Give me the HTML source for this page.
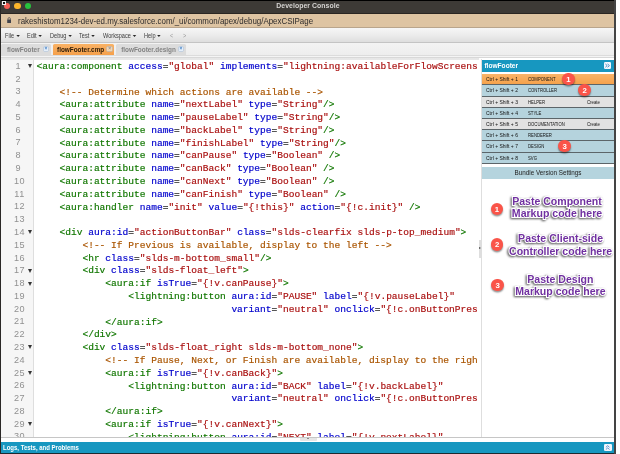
<!DOCTYPE html>
<html lang="en">
<head>
<meta charset="utf-8">
<title>Developer Console</title>
<style>
html,body{margin:0;padding:0;}
body{width:620px;height:454px;overflow:hidden;background:#fff;position:relative;font-family:"Liberation Sans",sans-serif;}
#win{position:absolute;left:0;top:0;width:616px;height:454px;overflow:hidden;will-change:transform;}
#lb{position:absolute;left:0;top:0;width:1px;height:454px;background:#2a2826;z-index:50;}
#rb{position:absolute;left:614.3px;top:0;width:1.7px;height:454px;background:#444;z-index:50;}
#title{position:absolute;left:0;top:0;width:616px;height:13.6px;background:#3d3a36;border-top:1px solid #000;box-sizing:border-box;border-bottom:0.7px solid #2a2622;}
#title .tt{position:absolute;left:275.9px;top:0.8px;width:64px;text-align:center;font-size:6.9px;font-weight:bold;color:#d6d4d2;line-height:8px;white-space:nowrap;letter-spacing:0.05px;}
.tl{position:absolute;top:1.6px;width:6.6px;height:6.6px;border-radius:50%;}
#cur{position:absolute;left:1.5px;top:1px;width:2.3px;height:2.4px;background:#111;border:solid #f0f0f0;border-width:0.9px 0.8px 0.7px 1.4px;z-index:60;}
#url{position:absolute;left:0;top:13.6px;width:616px;height:14.7px;background:#dec4a2;border-bottom:0.6px solid #b9a58c;box-sizing:border-box;}
#url .u{position:absolute;left:17.8px;top:2.3px;font-size:8.9px;line-height:10px;color:#2e2c2c;white-space:nowrap;transform:scaleX(0.8905);transform-origin:0 50%;}
#menu{position:absolute;left:0;top:28.3px;width:616px;height:14.6px;background:linear-gradient(#f6f6f6,#ececec 50%,#dedede);border-bottom:0.6px solid #c4c4c4;box-sizing:border-box;}
#menu span{position:absolute;top:3.6px;font-size:6.4px;line-height:8px;color:#3c3c3c;white-space:nowrap;transform:scaleX(0.875);transform-origin:0 50%;}
#menu i{display:inline-block;width:0;height:0;border-left:2.2px solid transparent;border-right:2.2px solid transparent;border-top:2.6px solid #2a2a2a;margin-left:2.3px;vertical-align:1.1px;}
#tabs{position:absolute;left:0;top:42.9px;width:616px;height:11.7px;background:linear-gradient(#f3f3f3,#ededed);}
#tabsb{position:absolute;left:0;top:54.5px;width:616px;height:5.1px;background:linear-gradient(#dcdcdc 0,#dcdcdc 0.8px,#f4f4f4 0.8px,#f4f4f4 1.5px,#d8d8d8 1.5px,#d8d8d8 2.9px,#e6e6e6 2.9px,#e8e8e8 5.1px);}
.tab{position:absolute;top:1.5px;height:10.2px;font-size:6.4px;font-weight:bold;line-height:11.8px;color:#838383;white-space:nowrap;box-sizing:border-box;background:#dcdcdc;border-radius:1.5px 1.5px 0 0;}
.tab b{font-weight:bold;}
.tab .x{position:absolute;top:2.4px;width:4.4px;height:4.4px;background:#e6eff9;box-shadow:0 0 0 0.5px #a9c4e4;border-radius:0.6px;font-size:4.8px;line-height:4.4px;color:#3f7fc4;text-align:center;font-weight:bold;}
#ed{position:absolute;left:1px;top:59.6px;width:477.6px;height:377.6px;background:#fff;overflow:hidden;border-right:1px solid #dcdcdc;}
#gut{position:absolute;left:0;top:0;width:32.2px;height:100%;background:#f6f6f6;border-right:0.7px solid #dedede;}
.ln{position:relative;height:12.782px;white-space:pre;font-family:"Liberation Mono",monospace;font-size:9.55px;line-height:12.782px;}
.ln .no{position:absolute;left:0;top:-1.2px;width:37px;text-align:center;color:#909090;font-family:"Liberation Sans",sans-serif;font-size:9.1px;letter-spacing:0.45px;}
.ln .no.d1{width:34.2px;letter-spacing:0;}
.ln .fo{position:absolute;left:26.5px;top:3.3px;width:0;height:0;border-left:2px solid transparent;border-right:2px solid transparent;border-top:4.4px solid #333;}
.ln .tx{position:absolute;left:35.6px;top:0;color:#222;-webkit-text-stroke:0.18px currentColor;}
.t{color:#117700;}
.a{color:#0000cc;}
.s{color:#aa1111;}
.c{color:#aa5500;}
#code{position:absolute;left:0;top:1.4px;width:100%;}
#sp{position:absolute;left:479.4px;top:57.7px;width:2.6px;height:384px;background:#fff;}
#rp{position:absolute;left:481.9px;top:57.7px;width:132.3px;height:380px;background:#fff;box-sizing:border-box;}
#hl{position:absolute;left:1px;top:437.1px;width:613.2px;height:0.9px;background:#c6c6c6;z-index:5;}
#vl{position:absolute;left:481px;top:59px;width:0.9px;height:378.2px;background:#dedede;}
#rh{position:absolute;left:0;top:2.2px;width:132.3px;height:12.6px;background:#1797c0;}
#rh b{position:absolute;left:2.5px;top:2.2px;font-size:6.6px;line-height:8px;color:#fff;}
#rh .ex{position:absolute;left:122px;top:2.3px;width:7.2px;height:7.2px;background:#f2f6fd;border-radius:1.2px;}
.row{position:relative;width:132.3px;height:10.22px;border-bottom:1px solid #5c6569;font-size:5.3px;line-height:10.4px;color:#111;white-space:nowrap;}
.row.o{background:linear-gradient(#f9b469,#f5a24c);}
.row.b{background:#b5d3dd;}
.row.g{background:#e2e2e2;}
.row span{position:absolute;top:0;transform-origin:0 50%;}
.row .k{left:3.7px;transform:scaleX(0.944);}
.row .n{left:46px;transform:scaleX(0.8);}
.row .cr{left:105.6px;transform:scaleX(0.81);}
#bvs{position:absolute;left:0;top:109.4px;width:132.3px;height:12.4px;background:#b5d4de;text-align:center;font-size:6.3px;line-height:12.4px;color:#222;}
.dot{position:absolute;width:12.8px;height:12.8px;border-radius:50%;background:#fa5449;color:#fff;font-weight:bold;font-size:7.8px;line-height:13px;text-align:center;box-shadow:0 1.4px 1.6px rgba(0,0,0,.42);z-index:20;}
.note{position:absolute;width:140px;text-align:center;font-weight:bold;font-size:10.55px;line-height:12.4px;color:#7030a0;white-space:nowrap;z-index:20;
 -webkit-text-stroke:2.2px #fff;paint-order:stroke fill;filter:drop-shadow(-0.4px 1.5px 0.8px rgba(0,0,0,.68));}
#bot{position:absolute;left:0;top:441.6px;width:616px;height:11.5px;background:#1797c0;}
#bot b{position:absolute;left:3.4px;top:2px;font-size:6.3px;line-height:8px;color:#fff;white-space:nowrap;transform:scaleX(0.953);transform-origin:0 50%;}
#bot .up{position:absolute;left:604.2px;top:2.2px;width:7.4px;height:7.2px;background:#f2f6fc;border-radius:1.3px;}
#botb{position:absolute;left:0;top:453.1px;width:616px;height:1px;background:#1d2a30;}
</style>
</head>
<body>
<div id="win">
<div id="title">
<span class="tl" style="left:3.6px;background:#f55d54"></span>
<span class="tl" style="left:14.2px;background:#fbb52b"></span>
<span class="tl" style="left:24.8px;background:#27c23d"></span>
<div class="tt">Developer Console</div>
</div>
<div id="cur"></div>
<div id="url">
<svg style="position:absolute;left:6.8px;top:3.2px" width="4.4" height="6.4" viewBox="0 0 44 64"><path d="M10 28V18a12 12 0 0 1 24 0v10" fill="none" stroke="#42444c" stroke-width="7"/><rect x="2" y="26" width="40" height="36" rx="5" fill="#42444c"/></svg>
<span class="u">rakeshistom1234-dev-ed.my.salesforce.com/_ui/common/apex/debug/ApexCSIPage</span>
</div>
<div id="menu">
<span style="left:4.8px">File<i></i></span>
<span style="left:26.6px">Edit<i></i></span>
<span style="left:49.6px">Debug<i></i></span>
<span style="left:79.4px">Test<i></i></span>
<span style="left:103px">Workspace<i></i></span>
<span style="left:144px">Help<i></i></span>
<span style="left:170px;color:#999">&lt;</span>
<span style="left:183px;color:#999">&gt;</span>
</div>
<div id="tabs">
<div class="tab" style="left:1.4px;width:49.6px;padding-left:5.6px">flowFooter<span class="x" style="left:42.3px">×</span></div>
<div class="tab" style="left:53px;width:60.6px;padding-left:4px;background:linear-gradient(#f9b266,#f5a04a);color:#2a1a08"><b>flowFooter.cmp</b><span class="x" style="left:54.4px;background:#f6d7b0;color:#7d8ea8">×</span></div>
<div class="tab" style="left:115.6px;width:70px;padding-left:5.6px">flowFooter.design<span class="x" style="left:63px">×</span></div>
</div>
<div id="tabsb"></div>
<div id="ed">
<div id="gut"></div>
<div id="code">
<div class="ln"><span class="no d1">1</span><span class="fo"></span><span class="tx"><span class="t">&lt;aura:component</span> <span class="a">access</span>=<span class="s">"global"</span> <span class="a">implements</span>=<span class="s">"lightning:availableForFlowScreens</span></span></div>
<div class="ln"><span class="no d1">2</span><span class="tx"></span></div>
<div class="ln"><span class="no d1">3</span><span class="tx">    <span class="c">&lt;!-- Determine which actions are available --&gt;</span></span></div>
<div class="ln"><span class="no d1">4</span><span class="tx">    <span class="t">&lt;aura:attribute</span> <span class="a">name</span>=<span class="s">"nextLabel"</span> <span class="a">type</span>=<span class="s">"String"</span><span class="t">/&gt;</span></span></div>
<div class="ln"><span class="no d1">5</span><span class="tx">    <span class="t">&lt;aura:attribute</span> <span class="a">name</span>=<span class="s">"pauseLabel"</span> <span class="a">type</span>=<span class="s">"String"</span><span class="t">/&gt;</span></span></div>
<div class="ln"><span class="no d1">6</span><span class="tx">    <span class="t">&lt;aura:attribute</span> <span class="a">name</span>=<span class="s">"backLabel"</span> <span class="a">type</span>=<span class="s">"String"</span><span class="t">/&gt;</span></span></div>
<div class="ln"><span class="no d1">7</span><span class="tx">    <span class="t">&lt;aura:attribute</span> <span class="a">name</span>=<span class="s">"finishLabel"</span> <span class="a">type</span>=<span class="s">"String"</span><span class="t">/&gt;</span></span></div>
<div class="ln"><span class="no d1">8</span><span class="tx">    <span class="t">&lt;aura:attribute</span> <span class="a">name</span>=<span class="s">"canPause"</span> <span class="a">type</span>=<span class="s">"Boolean"</span> <span class="t">/&gt;</span></span></div>
<div class="ln"><span class="no d1">9</span><span class="tx">    <span class="t">&lt;aura:attribute</span> <span class="a">name</span>=<span class="s">"canBack"</span> <span class="a">type</span>=<span class="s">"Boolean"</span> <span class="t">/&gt;</span></span></div>
<div class="ln"><span class="no">10</span><span class="tx">    <span class="t">&lt;aura:attribute</span> <span class="a">name</span>=<span class="s">"canNext"</span> <span class="a">type</span>=<span class="s">"Boolean"</span> <span class="t">/&gt;</span></span></div>
<div class="ln"><span class="no">11</span><span class="tx">    <span class="t">&lt;aura:attribute</span> <span class="a">name</span>=<span class="s">"canFinish"</span> <span class="a">type</span>=<span class="s">"Boolean"</span> <span class="t">/&gt;</span></span></div>
<div class="ln"><span class="no">12</span><span class="tx">    <span class="t">&lt;aura:handler</span> <span class="a">name</span>=<span class="s">"init"</span> <span class="a">value</span>=<span class="s">"{!this}"</span> <span class="a">action</span>=<span class="s">"{!c.init}"</span> <span class="t">/&gt;</span></span></div>
<div class="ln"><span class="no">13</span><span class="tx"></span></div>
<div class="ln"><span class="no">14</span><span class="fo"></span><span class="tx">    <span class="t">&lt;div</span> <span class="a">aura:id</span>=<span class="s">"actionButtonBar"</span> <span class="a">class</span>=<span class="s">"slds-clearfix slds-p-top_medium"</span><span class="t">&gt;</span></span></div>
<div class="ln"><span class="no">15</span><span class="tx">        <span class="c">&lt;!-- If Previous is available, display to the left --&gt;</span></span></div>
<div class="ln"><span class="no">16</span><span class="tx">        <span class="t">&lt;hr</span> <span class="a">class</span>=<span class="s">"slds-m-bottom_small"</span><span class="t">/&gt;</span></span></div>
<div class="ln"><span class="no">17</span><span class="fo"></span><span class="tx">        <span class="t">&lt;div</span> <span class="a">class</span>=<span class="s">"slds-float_left"</span><span class="t">&gt;</span></span></div>
<div class="ln"><span class="no">18</span><span class="fo"></span><span class="tx">            <span class="t">&lt;aura:if</span> <span class="a">isTrue</span>=<span class="s">"{!v.canPause}"</span><span class="t">&gt;</span></span></div>
<div class="ln"><span class="no">19</span><span class="tx">                <span class="t">&lt;lightning:button</span> <span class="a">aura:id</span>=<span class="s">"PAUSE"</span> <span class="a">label</span>=<span class="s">"{!v.pauseLabel}"</span></span></div>
<div class="ln"><span class="no">20</span><span class="tx">                                  <span class="a">variant</span>=<span class="s">"neutral"</span> <span class="a">onclick</span>=<span class="s">"{!c.onButtonPres</span></span></div>
<div class="ln"><span class="no">21</span><span class="tx">            <span class="t">&lt;/aura:if</span><span class="t">&gt;</span></span></div>
<div class="ln"><span class="no">22</span><span class="tx">        <span class="t">&lt;/div</span><span class="t">&gt;</span></span></div>
<div class="ln"><span class="no">23</span><span class="fo"></span><span class="tx">        <span class="t">&lt;div</span> <span class="a">class</span>=<span class="s">"slds-float_right slds-m-bottom_none"</span><span class="t">&gt;</span></span></div>
<div class="ln"><span class="no">24</span><span class="tx">            <span class="c">&lt;!-- If Pause, Next, or Finish are available, display to the righ</span></span></div>
<div class="ln"><span class="no">25</span><span class="fo"></span><span class="tx">            <span class="t">&lt;aura:if</span> <span class="a">isTrue</span>=<span class="s">"{!v.canBack}"</span><span class="t">&gt;</span></span></div>
<div class="ln"><span class="no">26</span><span class="tx">                <span class="t">&lt;lightning:button</span> <span class="a">aura:id</span>=<span class="s">"BACK"</span> <span class="a">label</span>=<span class="s">"{!v.backLabel}"</span></span></div>
<div class="ln"><span class="no">27</span><span class="tx">                                  <span class="a">variant</span>=<span class="s">"neutral"</span> <span class="a">onclick</span>=<span class="s">"{!c.onButtonPres</span></span></div>
<div class="ln"><span class="no">28</span><span class="tx">            <span class="t">&lt;/aura:if</span><span class="t">&gt;</span></span></div>
<div class="ln"><span class="no">29</span><span class="fo"></span><span class="tx">            <span class="t">&lt;aura:if</span> <span class="a">isTrue</span>=<span class="s">"{!v.canNext}"</span><span class="t">&gt;</span></span></div>
<div class="ln"><span class="no">30</span><span class="tx">                <span class="t">&lt;lightning:button</span> <span class="a">aura:id</span>=<span class="s">"NEXT"</span> <span class="a">label</span>=<span class="s">"{!v.nextLabel}"</span></span></div>
</div>
</div>
<div id="sp"></div>
<div id="vl"></div>
<div id="hl"></div>
<div style="position:absolute;left:478.9px;top:239.5px;width:2.8px;height:18px;background:#dedede;border-radius:0 1px 1px 0"></div>
<div style="position:absolute;left:479.2px;top:246.6px;width:0;height:0;border-left:2.2px solid #444;border-top:1.7px solid transparent;border-bottom:1.7px solid transparent"></div>
<div style="position:absolute;left:299.5px;top:438px;width:17.6px;height:2.5px;background:#e6e6e6;border-radius:0 0 1px 1px"></div>
<div style="position:absolute;left:306.6px;top:438.3px;width:0;height:0;border-top:1.9px solid #333;border-left:1.6px solid transparent;border-right:1.6px solid transparent"></div>
<div id="rp">
<div id="rh"><b>flowFooter</b><svg class="ex" viewBox="0 0 72 72"><path d="M14 20 32 36 14 52M36 20 54 36 36 52" fill="none" stroke="#3a86c0" stroke-width="9"/></svg></div>
<div style="position:absolute;left:0;top:16.4px;width:132px;height:90px">
<div class="row o"><span class="k">Ctrl + Shift + 1</span><span class="n">COMPONENT</span></div>
<div class="row b"><span class="k">Ctrl + Shift + 2</span><span class="n">CONTROLLER</span></div>
<div class="row g"><span class="k">Ctrl + Shift + 3</span><span class="n">HELPER</span><span class="cr">Create</span></div>
<div class="row b"><span class="k">Ctrl + Shift + 4</span><span class="n">STYLE</span></div>
<div class="row g"><span class="k">Ctrl + Shift + 5</span><span class="n">DOCUMENTATION</span><span class="cr">Create</span></div>
<div class="row b"><span class="k">Ctrl + Shift + 6</span><span class="n">RENDERER</span></div>
<div class="row b"><span class="k">Ctrl + Shift + 7</span><span class="n">DESIGN</span></div>
<div class="row b"><span class="k">Ctrl + Shift + 8</span><span class="n">SVG</span></div>
</div>
<div id="bvs">Bundle Version Settings</div>
</div>
<div class="dot" style="left:562.1px;top:72.6px">1</div>
<div class="dot" style="left:578.2px;top:83.5px">2</div>
<div class="dot" style="left:558.4px;top:139.5px">3</div>
<div class="dot" style="left:490.6px;top:202.6px">1</div>
<div class="dot" style="left:490.7px;top:238.2px">2</div>
<div class="dot" style="left:491.2px;top:278.6px">3</div>
<div class="note" style="left:487px;top:194.9px">Paste Component<br>Markup code here</div>
<div class="note" style="left:490.6px;top:232.1px">Paste Client-side<br>Controller code here</div>
<div class="note" style="left:490.4px;top:272.9px">Paste Design<br>Markup code here</div>
<div id="bot"><b>Logs, Tests, and Problems</b>
<svg class="up" viewBox="0 0 74 72"><path d="M19 33 37 17 55 33M19 55 37 39 55 55" fill="none" stroke="#3a7cc4" stroke-width="8"/></svg>
</div>
<div id="botb"></div>
<div id="lb"></div>
<div id="rb"></div>
</div>
</body>
</html>
